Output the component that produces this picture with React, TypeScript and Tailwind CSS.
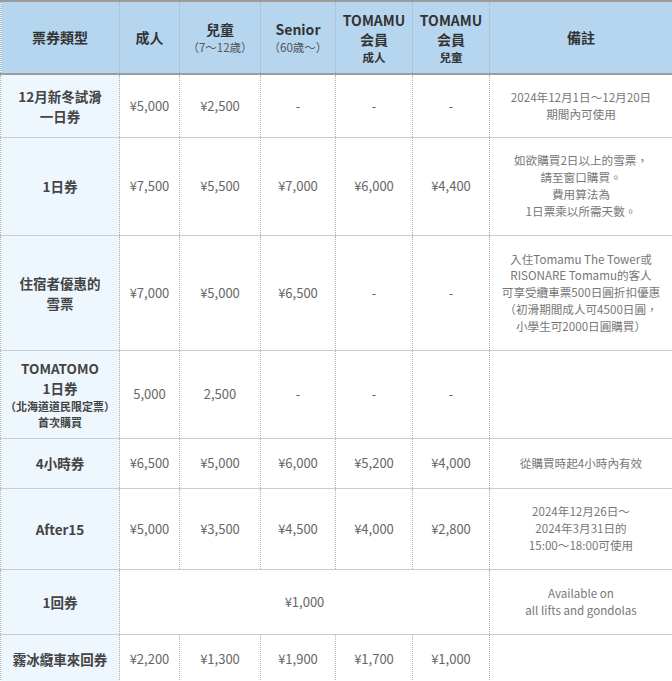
const FONT = { fontFamily: '"Noto Sans CJK TC", "Noto Sans", sans-serif' };

type Row = {
  h: string;
  label: React.ReactNode;
  prices: string[] | string;
  note?: React.ReactNode;
};

const rows: Row[] = [
  {
    h: "h-[63px]",
    label: (
      <>
        12月新冬試滑
        <br />
        一日券
      </>
    ),
    prices: ["¥5,000", "¥2,500", "-", "-", "-"],
    note: (
      <>
        2024年12月1日〜12月20日
        <br />
        期間內可使用
      </>
    ),
  },
  {
    h: "h-[98px]",
    label: "1日券",
    prices: ["¥7,500", "¥5,500", "¥7,000", "¥6,000", "¥4,400"],
    note: (
      <>
        如欲購買2日以上的雪票，
        <br />
        請至窗口購買。
        <br />
        費用算法為
        <br />
        1日票乘以所需天數。
      </>
    ),
  },
  {
    h: "h-[115px]",
    label: (
      <>
        住宿者優惠的
        <br />
        雪票
      </>
    ),
    prices: ["¥7,000", "¥5,000", "¥6,500", "-", "-"],
    note: (
      <>
        入住Tomamu The Tower或
        <br />
        RISONARE Tomamu的客人
        <br />
        可享受纜車票500日圓折扣優惠
        <br />
        （初滑期間成人可4500日圓，
        <br />
        小學生可2000日圓購買）
      </>
    ),
  },
  {
    h: "h-[88px]",
    label: (
      <div>
        <div className="leading-[20px]">TOMATOMO</div>
        <div className="leading-[20px]">1日券</div>
        <div className="text-[11px] leading-[16.5px]">（北海道道民限定票）</div>
        <div className="text-[11px] leading-[16.5px]">首次購買</div>
      </div>
    ),
    prices: ["5,000", "2,500", "-", "-", "-"],
  },
  {
    h: "h-[50px]",
    label: "4小時券",
    prices: ["¥6,500", "¥5,000", "¥6,000", "¥5,200", "¥4,000"],
    note: "從購買時起4小時內有效",
  },
  {
    h: "h-[81px]",
    label: "After15",
    prices: ["¥5,000", "¥3,500", "¥4,500", "¥4,000", "¥2,800"],
    note: (
      <>
        2024年12月26日〜
        <br />
        2024年3月31日的
        <br />
        15:00〜18:00可使用
      </>
    ),
  },
  {
    h: "h-[65px]",
    label: "1回券",
    prices: "¥1,000",
    note: (
      <>
        Available on
        <br />
        all lifts and gondolas
      </>
    ),
  },
  {
    h: "h-[50px]",
    label: "霧冰纜車來回券",
    prices: ["¥2,200", "¥1,300", "¥1,900", "¥1,700", "¥1,000"],
  },
];

const cell = "border-x border-dotted border-[#b0b0b0] text-center align-middle p-0";

export default function App() {
  return (
    <div className="w-[672px] bg-white" style={FONT}>
      <table className="w-[672px] table-fixed border-collapse">
        <colgroup>
          <col className="w-[119px]" />
          <col className="w-[60px]" />
          <col className="w-[81px]" />
          <col className="w-[75px]" />
          <col className="w-[77px]" />
          <col className="w-[77px]" />
          <col className="w-[183px]" />
        </colgroup>
        <thead>
          <tr className="h-[73px] border-t-2 border-b-2 border-[#9c9c9c] bg-[#b6d6f0] text-[#333] font-bold text-[14px]">
            <th className={cell}>票券類型</th>
            <th className={cell}>成人</th>
            <th className={cell}>
              <div className="leading-[19px]">兒童</div>
              <div className="text-[11.5px] font-normal text-[#555] leading-[17px]">（7〜12歳）</div>
            </th>
            <th className={cell}>
              <div className="leading-[19px]">Senior</div>
              <div className="text-[11.5px] font-normal text-[#555] leading-[17px]">（60歳〜）</div>
            </th>
            <th className={cell}>
              <div className="leading-[20px]">TOMAMU</div>
              <div className="leading-[19px]">会員</div>
              <div className="text-[11.5px] leading-[17px]">成人</div>
            </th>
            <th className={cell}>
              <div className="leading-[20px]">TOMAMU</div>
              <div className="leading-[19px]">会員</div>
              <div className="text-[11.5px] leading-[17px]">兒童</div>
            </th>
            <th className={cell}>備註</th>
          </tr>
        </thead>
        <tbody>
          {rows.map((r, i) => (
            <tr key={i} className={`${r.h} border-b border-[#cccccc]`}>
              <td className={`${cell} bg-[#eef6fe] text-[13.5px] font-bold text-[#444] leading-[20px]`}>
                {r.label}
              </td>
              {typeof r.prices === "string" ? (
                <td colSpan={5} className={`${cell} text-[13px] text-[#666]`}>
                  {r.prices}
                </td>
              ) : (
                r.prices.map((p, j) => (
                  <td key={j} className={`${cell} text-[13px] text-[#666]`}>
                    {p}
                  </td>
                ))
              )}
              <td className={`${cell} text-[11.6px] text-[#777] leading-[16.8px]`}>{r.note}</td>
            </tr>
          ))}
        </tbody>
      </table>
    </div>
  );
}
